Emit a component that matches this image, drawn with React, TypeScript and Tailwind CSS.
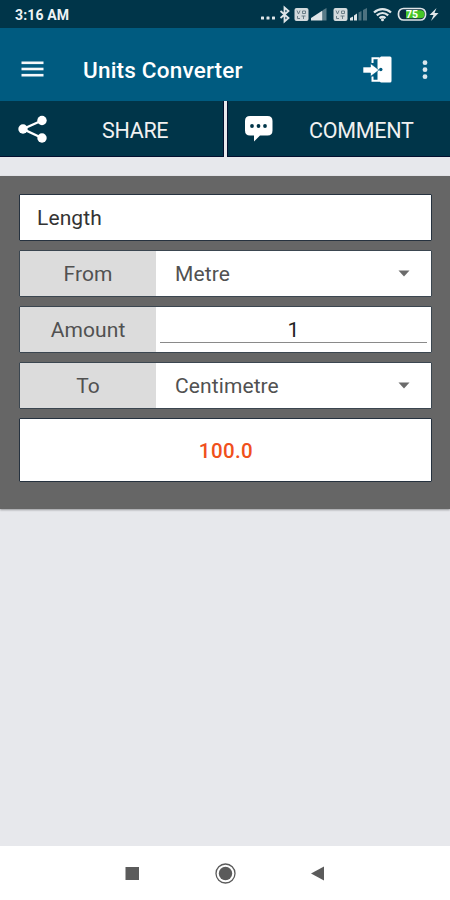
import type { ReactNode } from 'react'

export default function App() {
  return (
    <div className="flex h-[900px] w-[450px] flex-col overflow-hidden bg-[#e7e8ec] font-[Roboto,sans-serif]">
      <StatusBar />
      <AppBar />

      {/* Share / comment */}
      <div className="flex h-14 shrink-0 gap-[3px] bg-[#e7e8ec]">
        <button className="flex w-56 items-center border-r border-b border-[#02102f] bg-[#003549] pl-[18px] text-white">
          <ShareIcon />
          <span className="ml-[54px] pt-[5px] text-[21.5px] leading-none tracking-[-0.3px] text-[#f1f1f1]">SHARE</span>
        </button>
        <button className="flex flex-1 items-center border-b border-l border-[#02102f] bg-[#003549] pl-[16px] text-white">
          <CommentIcon />
          <span className="ml-[36px] pt-[5px] text-[21.5px] leading-none tracking-[-0.25px] text-[#f1f1f1]">COMMENT</span>
        </button>
      </div>

      {/* Converter */}
      <main className="mt-[19px] flex h-[333px] shrink-0 flex-col gap-[9px] bg-[#666666] pt-[18px] pr-[18px] pl-[19px] shadow-[0_1px_2px_rgba(0,0,0,0.35)]">
        <div className="flex h-[47px] items-center rounded-[1px] border border-[#26323f] bg-white pt-[2px] pl-[17px] text-[21px] tracking-[0.1px] text-[#333]">
          Length
        </div>
        <Row label="From">
          <UnitSelect value="Metre" />
        </Row>
        <Row label="Amount">
          <div className="mx-1 mb-[9px] flex flex-1 items-center justify-center self-stretch border-b border-[#8a8a8a] pt-[12px] text-[21px] text-[#222]">
            1
          </div>
        </Row>
        <Row label="To">
          <UnitSelect value="Centimetre" />
        </Row>
        <div className="flex h-[64px] items-center justify-center rounded-[1px] border border-[#26323f] bg-white pt-[2px] pl-[1px] text-[20.5px] font-medium tracking-[0.4px] text-[#f0501c]">
          100.0
        </div>
      </main>

      {/* System navigation */}
      <nav className="mt-auto flex h-[54px] shrink-0 items-center justify-center bg-white">
        <svg width="220" height="24" viewBox="0 0 220 24" fill="#5b5b5b">
          <rect x="10.5" y="6" width="13.5" height="13" />
          <circle cx="110.500" cy="12.500" r="6.700" />
          <circle cx="110.500" cy="12.500" r="9.500" fill="none" stroke="#5b5b5b" strokeWidth="1.300" />
          <path d="M196 12.500L209 5.500v14z" />
        </svg>
      </nav>
    </div>
  )
}

function StatusBar() {
  return (
    <header className="flex h-7 shrink-0 items-center justify-between bg-[#003549] pr-2.5 pl-[15px]">
      <span className="pt-[2px] text-[14px] leading-none font-bold tracking-[0.15px] text-[#eef3f5]">3:16 AM</span>
      <svg width="180" height="28" viewBox="0 0 180 28" fill="#dfe5e8">
        <rect x="1" y="16.500" width="3" height="3" rx="0.500" />
        <rect x="6.500" y="16.500" width="3" height="3" rx="0.500" />
        <rect x="12" y="16.500" width="3" height="3" rx="0.500" />
        {/* bluetooth */}
        <path d="M20.500 11l8 7-4 3.500v-14l4 3.500-8 7" fill="none" stroke="#dfe5e8" strokeWidth="1.800" />
        {/* sim 1 */}
        <VolteBadge x={34.5} />
        <path d="M51 20.500v-2.500l11.500-7.500v10z" />
        <path d="M63 20.500v-10.500l3.500-2v12.500z" opacity="0.4" />
        {/* sim 2 */}
        <VolteBadge x={73.5} />
        <path d="M90 20.500v-2.500l3-1.500v4zM94 20.500v-5l3-2v7z" />
        <path d="M98.500 20.500v-8l3-1.500v9.500zM103 20.500v-10.500l4-2v12.500z" opacity="0.35" />
        {/* wifi */}
        <g fill="none" stroke="#dfe5e8" strokeWidth="2.300">
          <path d="M114 12.500c5-4.500 12-4.500 17 0" />
          <path d="M116.800 15.400c3.500-3 8-3 11.400 0" />
          <path d="M119.500 18.200c2-1.600 4-1.600 6 0" />
        </g>
        <circle cx="122.500" cy="19.800" r="1.500" />
        {/* battery */}
        <rect x="138.500" y="8.500" width="27" height="11.500" rx="5" fill="#0b2c40" stroke="#dfe5e8" strokeWidth="1.700" />
        <path d="M146 10.200h14.500a4 4 0 0 1 0 8H146z" fill="#45c626" />
        <text x="152" y="18" fontSize="10.500" fontWeight="700" textAnchor="middle" fill="#fff">75</text>
        <path d="M176.500 8l-7 7h4l-2.500 6 7.500-8h-4z" />
      </svg>
    </header>
  )
}

function VolteBadge({ x }: { x: number }) {
  return (
    <g>
      <rect x={x} y="8" width="14" height="13" rx="2" fill="#d3dadd" />
      <path
        d={`M${x + 2.5} 10.500l1.500 3.500 1.500-3.500M${x + 8} 11h3v2.500h-3zM${x + 3} 16v2.500h2.500M${x + 7} 16h4M${x + 9} 16v3`}
        fill="none"
        stroke="#60757f"
        strokeWidth="0.900"
      />
    </g>
  )
}

function AppBar() {
  return (
    <div className="flex h-[73px] shrink-0 items-center bg-[#005b80] pt-[10px] pl-[21px] text-white">
      <svg width="23" height="18" viewBox="0 0 23 18" fill="#f5f8fa">
        <rect x="0.500" y="0.500" width="22" height="2.600" />
        <rect x="0.500" y="6.700" width="22" height="2.600" />
        <rect x="0.500" y="12.900" width="22" height="2.600" />
      </svg>
      <h1 className="ml-[39px] pt-[2px] text-[22.5px] leading-none font-medium tracking-[0.2px]">Units Converter</h1>
      <div className="mr-[21px] ml-auto flex items-center">
        {/* exit door */}
        <svg width="30" height="28" viewBox="0 0 30 28" fill="#fff">
          <path d="M10.500 7V2.200h7M10.500 20.500v4.300h7" fill="none" stroke="#fff" strokeWidth="2" />
          <path d="M15.500 3.500L19 .500h9q1.500 0 1.500 1.500v23q0 1.500-1.500 1.500h-9l-3.500-2z" />
          <path d="M1 11h7.500V7.500l8.500 6.500-8.500 6.500V17H1z" stroke="#005b80" strokeWidth="0.600" />
          <circle cx="18.800" cy="13.500" r="1.700" fill="#005b80" />
        </svg>
        <svg className="ml-[29px]" width="8" height="22" viewBox="0 0 8 22" fill="#d9e6ec">
          <circle cx="4" cy="3.700" r="2.400" />
          <circle cx="4" cy="10.700" r="2.400" />
          <circle cx="4" cy="17.700" r="2.400" />
        </svg>
      </div>
    </div>
  )
}

function Row({ label, children }: { label: string; children: ReactNode }) {
  return (
    <div className="flex h-[47px] items-center overflow-hidden rounded-[1px] border border-[#3b4650] bg-white">
      <div className="flex w-[136px] items-center justify-center self-stretch bg-[#dcdcdc] pt-[2px] text-[21px] tracking-[0.1px] text-[#515151]">
        {label}
      </div>
      {children}
    </div>
  )
}

function UnitSelect({ value }: { value: string }) {
  return (
    <div className="flex flex-1 items-center justify-between pr-[21px] pl-[19px] text-[21px] tracking-[0.1px] text-[#515151]">
      <span className="pt-[2px]">{value}</span>
      <svg width="12" height="7" viewBox="0 0 12 7" fill="#6b6b6b">
        <path d="M.500.500h11L6 6.500z" />
      </svg>
    </div>
  )
}

function ShareIcon() {
  return (
    <svg width="30" height="28" viewBox="0 0 30 28" fill="#fff">
      <path d="M24 5.500L5 14l19 9" fill="none" stroke="#fff" strokeWidth="2.400" />
      <circle cx="24" cy="5.500" r="4.700" />
      <circle cx="5" cy="14" r="4.700" />
      <circle cx="24" cy="23" r="4.700" />
    </svg>
  )
}

function CommentIcon() {
  return (
    <svg width="29" height="28" viewBox="0 0 29 28" fill="#fff">
      <path d="M6 1h17.500q5 0 5 5v9.500q0 5-5 5H16l-6 6v-6H6q-5 0-5-5V6q0-5 5-5z" />
      <g fill="#003549">
        <circle cx="8" cy="11" r="1.900" />
        <circle cx="14.500" cy="11" r="1.900" />
        <circle cx="21" cy="11" r="1.900" />
      </g>
    </svg>
  )
}
